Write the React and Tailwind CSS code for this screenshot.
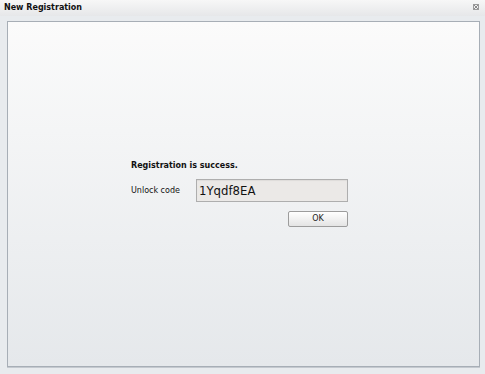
export default function App() {
  return (
    <div className="flex h-[374px] w-[485px] flex-col bg-[#e8ebee] font-['DejaVu_Sans',sans-serif] text-[#111]">
      {/* title bar */}
      <div className="flex h-[16px] items-center justify-between bg-gradient-to-b from-[#f7f7f7] to-[#e6e7e9] pl-[4px] pr-[6px]">
        <span className="text-[8px] font-bold leading-none">New Registration</span>
        <svg width="6" height="6" viewBox="0 0 6 6" className="mb-[2px]">
          <rect x="0.5" y="0.5" width="5" height="5" fill="none" stroke="#9a9a9a" strokeWidth="1" />
          <path d="M1 1 L5 5 M5 1 L1 5" stroke="#8a8a8a" strokeWidth="1" />
        </svg>
      </div>

      <div className="mb-[7px] ml-[7px] mr-[5px] mt-[5px] flex-1 border border-[#a7aeb6] bg-gradient-to-b from-[#fbfbfb] to-[#e5e8eb] shadow-[0_1px_0_#c4c9cf]">
        <div className="pl-[123px] pt-[139px]">
          <div className="text-[8px] font-bold leading-[10px]">Registration is success.</div>

          <div className="mt-[8px] flex items-center">
            <span className="w-[65px] text-[8px] leading-[10px]">Unlock code</span>
            <div className="flex h-[23px] w-[152px] items-center border border-[#aeaeae] bg-[#ebe9e7] pl-[2px] font-['DejaVu_Sans_Condensed',Roboto,sans-serif] text-[13px] shadow-[inset_0_1px_1px_rgba(0,0,0,0.06)]">
              1Yqdf8EA
            </div>
          </div>

          <div className="mt-[9px] flex w-[217px] justify-end">
            <button className="flex h-[16px] w-[60px] items-center justify-center rounded-[2px] border border-[#9c9c9c] bg-gradient-to-b from-[#ffffff] to-[#e4e4e4] text-[8px] leading-none text-[#222]">
              OK
            </button>
          </div>
        </div>
      </div>
    </div>
  )
}
